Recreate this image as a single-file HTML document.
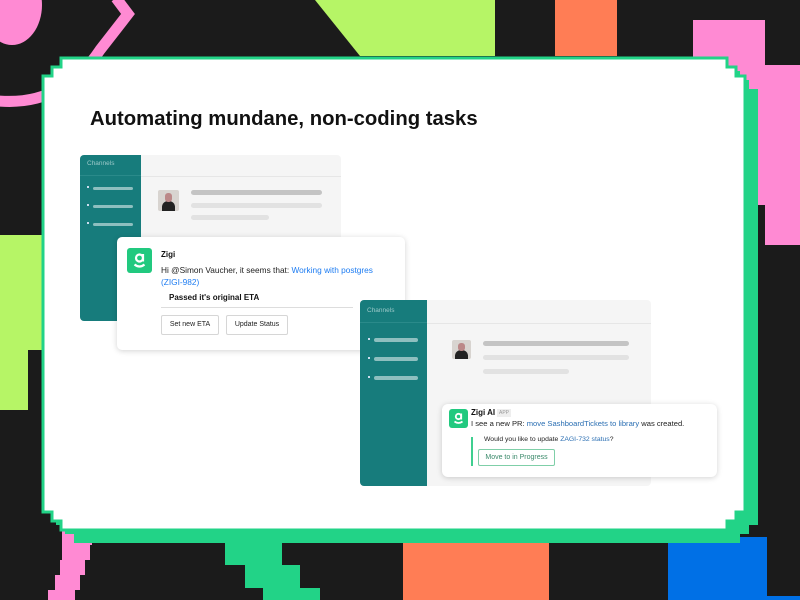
<!DOCTYPE html>
<html><head><meta charset="utf-8"><style>
*{margin:0;padding:0;box-sizing:border-box}
body{width:800px;height:600px;overflow:hidden;background:#1b1b1b;position:relative;font-family:"Liberation Sans",sans-serif}
.a{position:absolute}
.bar{position:absolute;height:5px;border-radius:3px}
.sb{background:#177c7c}
.logo{background:#21c97f;border-radius:3px}
.btn{position:absolute;border:1px solid #d6d6d6;border-radius:2px;font-size:7px;color:#222;text-align:center}
.card{background:#fff;border-radius:5px;box-shadow:0 1px 6px rgba(0,0,0,.18)}
</style></head><body>
<svg class="a" style="left:0;top:0" width="800" height="600" viewBox="0 0 800 600">
<ellipse cx="12" cy="5" rx="30" ry="40" fill="#ff8ad3"/>
<path d="M-10 100 Q60 110 100 50 L128 14 L116 -2" fill="none" stroke="#ff8ad3" stroke-width="11"/>
<polygon points="315,0 495,0 495,56 360,56" fill="#b6f566"/>
<rect x="555" y="0" width="62" height="56" fill="#ff7d55"/>
<polygon points="693,20 765,20 765,65 800,65 800,245 765,245 765,205 693,205" fill="#ff8ad3"/>
<polygon points="0,235 45,235 45,350 28,350 28,410 0,410" fill="#b6f566"/>
<polygon points="62,530 92,530 92,545 90,545 90,560 85,560 85,575 80,575 80,590 75,590 75,600 48,600 48,590 55,590 55,575 60,575 60,560 62,560" fill="#ff8ad3"/>
<polygon points="225,540 282,540 282,565 300,565 300,588 320,588 320,600 263,600 263,588 245,588 245,565 225,565" fill="#22d387"/>
<rect x="403" y="540" width="146" height="60" fill="#ff7d55"/>
<polygon points="668,537 767,537 767,596 800,596 800,600 668,600" fill="#0070e6"/>
<g transform="translate(13,13)"><polygon fill="#22d387" points="61,58 727,58 727,67 736,67 736,76 745,76 745,512 736,512 736,521 727,521 727,530 61,530 61,521 52,521 52,512 43,512 43,76 52,76 52,67 61,67"/></g>
<polygon fill="#fff" stroke="#22d387" stroke-width="3" points="61,58 727,58 727,67 736,67 736,76 745,76 745,512 736,512 736,521 727,521 727,530 61,530 61,521 52,521 52,512 43,512 43,76 52,76 52,67 61,67"/>
</svg>
<div class="a" style="left:90px;top:108px;font-size:20.3px;font-weight:bold;color:#111">Automating mundane, non-coding tasks</div>

<!-- panel 1 -->
<div class="a" style="left:80px;top:155px;width:261px;height:166px;background:#f5f5f5;border-radius:4px"></div>
<div class="a sb" style="left:80px;top:155px;width:61px;height:166px;border-radius:4px 0 0 4px"></div>
<div class="a" style="left:87px;top:160px;font-size:6.5px;color:#9cc9c9">Channels</div>
<div class="a" style="left:80px;top:175px;width:61px;height:1px;background:#2a8a8a"></div>
<div class="a" style="left:141px;top:176px;width:200px;height:1px;background:#e6e6e6"></div>
<div class="a" style="left:87px;top:186px;width:2px;height:2px;background:#cde"></div><div class="bar" style="left:93px;top:187px;width:40px;height:3px;background:#8ebfbf"></div>
<div class="a" style="left:87px;top:204px;width:2px;height:2px;background:#cde"></div><div class="bar" style="left:93px;top:205px;width:40px;height:3px;background:#8ebfbf"></div>
<div class="a" style="left:87px;top:222px;width:2px;height:2px;background:#cde"></div><div class="bar" style="left:93px;top:223px;width:40px;height:3px;background:#8ebfbf"></div>
<div class="a" style="left:158px;top:190px;width:21px;height:21px;background:#d8d4d0;border-radius:2px;overflow:hidden"><div class="a" style="left:4px;top:11px;width:13px;height:10px;background:#222;border-radius:6px 6px 0 0"></div><div class="a" style="left:7px;top:3px;width:7px;height:9px;background:#b88;border-radius:3px"></div></div>
<div class="bar" style="left:191px;top:190px;width:131px;background:#c4c4c4"></div>
<div class="bar" style="left:191px;top:203px;width:131px;background:#e2e2e2"></div>
<div class="bar" style="left:191px;top:215px;width:78px;background:#e2e2e2"></div>

<div class="a card" style="left:117px;top:237px;width:288px;height:113px"></div>
<div class="a logo" style="left:127px;top:248px;width:25px;height:25px"><svg width="25" height="25"><circle cx="12.5" cy="10" r="3.5" fill="none" stroke="#fff" stroke-width="2.2"/><path d="M16 6V13.5M7.5 16.5Q12.5 20.5 17.5 16.5" fill="none" stroke="#fff" stroke-width="2.2"/></svg></div>
<div class="a" style="left:161px;top:250px;font-size:8px;font-weight:bold;color:#111">Zigi</div>
<div class="a" style="left:161px;top:264px;font-size:8.3px;color:#222;line-height:12px;width:232px">Hi @Simon Vaucher, it seems that: <span style="color:#1d7cf2">Working with postgres (ZIGI-982)</span></div>
<div class="a" style="left:169px;top:293px;font-size:8px;font-weight:bold;color:#111">Passed it's original ETA</div>
<div class="a" style="left:161px;top:307px;width:192px;height:1px;background:#ddd"></div>
<div class="btn" style="left:161px;top:315px;width:58px;height:20px;line-height:18px">Set new ETA</div>
<div class="btn" style="left:226px;top:315px;width:62px;height:20px;line-height:18px">Update Status</div>

<!-- panel 2 -->
<div class="a" style="left:360px;top:300px;width:291px;height:186px;background:#f5f5f5;border-radius:4px"></div>
<div class="a sb" style="left:360px;top:300px;width:67px;height:186px;border-radius:4px 0 0 4px"></div>
<div class="a" style="left:367px;top:307px;font-size:6.5px;color:#9cc9c9">Channels</div>
<div class="a" style="left:360px;top:322px;width:67px;height:1px;background:#2a8a8a"></div>
<div class="a" style="left:427px;top:323px;width:224px;height:1px;background:#e6e6e6"></div>
<div class="a" style="left:368px;top:338px;width:2px;height:2px;background:#cde"></div><div class="bar" style="left:374px;top:338px;width:44px;height:4px;background:#8ebfbf"></div>
<div class="a" style="left:368px;top:357px;width:2px;height:2px;background:#cde"></div><div class="bar" style="left:374px;top:357px;width:44px;height:4px;background:#8ebfbf"></div>
<div class="a" style="left:368px;top:376px;width:2px;height:2px;background:#cde"></div><div class="bar" style="left:374px;top:376px;width:44px;height:4px;background:#8ebfbf"></div>
<div class="a" style="left:452px;top:340px;width:19px;height:19px;background:#d8d4d0;border-radius:2px;overflow:hidden"><div class="a" style="left:3px;top:10px;width:13px;height:9px;background:#222;border-radius:6px 6px 0 0"></div><div class="a" style="left:6px;top:3px;width:7px;height:8px;background:#b88;border-radius:3px"></div></div>
<div class="bar" style="left:483px;top:341px;width:146px;background:#c4c4c4"></div>
<div class="bar" style="left:483px;top:355px;width:146px;background:#e2e2e2"></div>
<div class="bar" style="left:483px;top:369px;width:86px;background:#e2e2e2"></div>

<div class="a card" style="left:442px;top:404px;width:275px;height:73px;border-radius:6px"></div>
<div class="a logo" style="left:449px;top:409px;width:19px;height:19px"><svg width="19" height="19"><circle cx="9.5" cy="7.5" r="2.7" fill="none" stroke="#fff" stroke-width="1.8"/><path d="M12.2 4.5V10.5M5.5 12.5Q9.5 15.5 13.5 12.5" fill="none" stroke="#fff" stroke-width="1.8"/></svg></div>
<div class="a" style="left:471px;top:408px;font-size:8px;font-weight:bold;color:#111">Zigi AI</div>
<div class="a" style="left:497px;top:409px;font-size:5px;color:#999;background:#eee;padding:1px 2px">APP</div>
<div class="a" style="left:471px;top:419px;font-size:7.6px;color:#222;white-space:nowrap">I see a new PR: <span style="color:#2b6fb3">move SashboardTickets to library</span> was created.</div>
<div class="a" style="left:471px;top:437px;width:2px;height:29px;background:#3fcf90"></div>
<div class="a" style="left:484px;top:436px;font-size:6.8px;color:#222;white-space:nowrap">Would you like to update <span style="color:#2b6fb3">ZAGI-732 status</span>?</div>
<div class="btn" style="left:478px;top:449px;width:77px;height:17px;line-height:15px;border-color:#7fcfa8;color:#3a8a6a">Move to in Progress</div>
</body></html>
